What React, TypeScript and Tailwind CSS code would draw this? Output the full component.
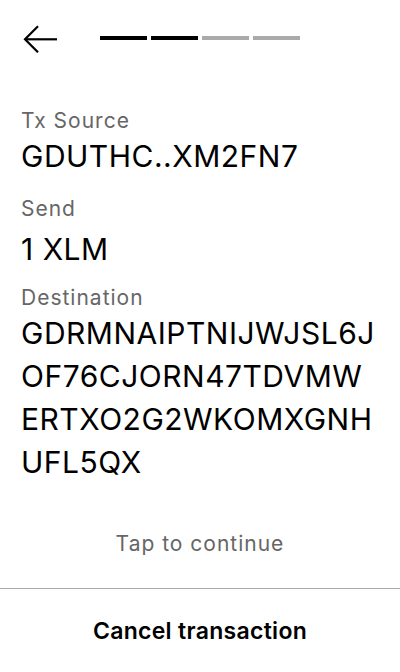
const destination = ['GDRMNAIPTNIJWJSL6J', 'OF76CJORN47TDVMW', 'ERTXO2G2WKOMXGNH', 'UFL5QX'];

const steps = [true, true, false, false];

function BackArrow() {
  return (
    <svg width="36" height="28" viewBox="0 0 36 28" fill="none" stroke="black" strokeWidth="2.2">
      <path d="M35 14.3H3" />
      <path d="M16 1.3L3 14.3L16 27.3" />
    </svg>
  );
}

function Field({ label, children, className = '' }: { label: string; children: React.ReactNode; className?: string }) {
  return (
    <div className={`flex flex-col ${className}`}>
      <div className="text-[21px] leading-[28px] tracking-[1px] text-[#666666]">{label}</div>
      {children}
    </div>
  );
}

export default function App() {
  return (
    <div className="flex h-[672px] w-[400px] flex-col bg-white font-['Inter',sans-serif]">
      <div className="flex h-[78px] items-center px-[22px]">
        <BackArrow />
        <div className="mb-[2px] ml-[42px] flex gap-[4px]">
          {steps.map((done, i) => (
            <div key={i} className={done ? 'h-[4px] w-[47px] bg-black' : 'h-[4px] w-[47px] bg-[#aaaaaa]'} />
          ))}
        </div>
      </div>

      <div className="flex flex-col px-[21px] pt-[29px]">
        <Field label="Tx Source" className="mb-[17px]">
          <div className="text-[30px] leading-[43px] tracking-[0.5px] text-black">GDUTHC..XM2FN7</div>
        </Field>
        <Field label="Send" className="mb-[13px]">
          <div className="mt-[5px] text-[30px] leading-[43px] tracking-[0.5px] text-black">1 XLM</div>
        </Field>
        <Field label="Destination">
          <div className="text-[30px] leading-[43px] tracking-[0.5px] text-black">
            {destination.map((line) => (
              <div key={line}>{line}</div>
            ))}
          </div>
        </Field>
      </div>

      <div className="mt-auto flex flex-col">
        <div className="mb-[30px] text-center text-[21px] leading-[28px] tracking-[1px] text-[#666666]">
          Tap to continue
        </div>
        <div className="flex h-[84px] items-center justify-center border-t border-[#aaaaaa]">
          <span className="text-[23px] font-semibold leading-[28px] tracking-[0.3px] text-black">Cancel transaction</span>
        </div>
      </div>
    </div>
  );
}
